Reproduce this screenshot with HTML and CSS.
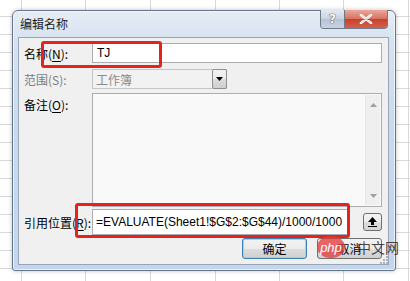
FILE: index.html
```html
<!DOCTYPE html>
<html>
<head>
<meta charset="utf-8">
<title>编辑名称</title>
<link rel="stylesheet" href="styles.css">
</head>
<body>
<div class="sheet">
  <div class="dialog">
    <div class="titlebar">
      <span class="title">编辑名称</span>
      <div class="caption-btns">
        <span class="cap-help">?</span>
        <span class="cap-close">
          <svg width="14" height="10" viewBox="0 0 14 10"><path d="M2 1 L12 9 M12 1 L2 9" stroke="#fff" stroke-width="2.6" stroke-linecap="round"/><path d="M2 1 L12 9 M12 1 L2 9" stroke="#7a2b22" stroke-width="0.6" opacity="0.4"/></svg>
        </span>
      </div>
    </div>
    <div class="client">
      <div class="row row-name">
        <label>名称(<u>N</u>):</label>
        <div class="field name-field">TJ</div>
      </div>
      <div class="row row-scope">
        <label class="disabled">范围(S):</label>
        <div class="combo">
          <span class="combo-text">工作簿</span>
          <span class="combo-btn"><svg width="7" height="4" viewBox="0 0 7 4"><path d="M0 0 H7 L3.5 4 Z" fill="#000"/></svg></span>
        </div>
      </div>
      <div class="row row-note">
        <label>备注(<u>O</u>):</label>
        <div class="memo">
          <div class="memo-text"></div>
          <div class="vscroll">
            <svg width="7" height="4" viewBox="0 0 7 4"><path d="M0 4 H7 L3.5 0 Z" fill="#a0a0a0"/></svg>
            <svg width="7" height="4" viewBox="0 0 7 4"><path d="M0 0 H7 L3.5 4 Z" fill="#a0a0a0"/></svg>
          </div>
        </div>
      </div>
      <div class="row row-ref">
        <label>引用位置(<u>R</u>):</label>
        <div class="field ref-field">=EVALUATE(Sheet1!$G$2:$G$44)/1000/1000</div>
        <span class="collapse-btn"><svg width="9" height="10" viewBox="0 0 9 10"><path d="M4.5 0 L9 5 H6 V8 H3 V5 H0 Z" fill="#000"/><rect x="0" y="9" width="9" height="1.2" fill="#000"/></svg></span>
      </div>
      <div class="buttons">
        <button class="btn btn-default">确定</button>
        <button class="btn">取消</button>
      </div>
      <span class="grip"><svg width="10" height="10" viewBox="0 0 10 10"><g fill="#a9b4c2"><rect x="8" y="2" width="2" height="2"/><rect x="5" y="5" width="2" height="2"/><rect x="8" y="5" width="2" height="2"/><rect x="2" y="8" width="2" height="2"/><rect x="5" y="8" width="2" height="2"/><rect x="8" y="8" width="2" height="2"/></g></svg></span>
    </div>
    <div class="mark mark-name"></div>
    <div class="mark mark-ref"></div>
  </div>
  <div class="watermark">
    <span class="wm-php">php</span>
    <span class="wm-text">中文网</span>
  </div>
</div>
</body>
</html>
```
FILE: styles.css
```css
body{
	margin: 0;
	font-family: "Noto Sans CJK SC", "Liberation Sans", sans-serif;
	font-size: 12px;
	color: #000;
}

.sheet{
	position: relative;
	width: 410px;
	height: 281px;
	overflow: hidden;
	box-sizing: border-box;
	padding: 10px 0 0 12px;
	background-color: #fff;
	background-image:
		repeating-linear-gradient(to right, transparent 0, transparent 21px, #d9d9d9 21px, #d9d9d9 22px, transparent 22px, transparent 64.5px),
		repeating-linear-gradient(to bottom, transparent 0, transparent 16px, #d9d9d9 16px, #d9d9d9 17px, transparent 17px, transparent 18px);
}

/* window */
.dialog{
	position: relative;
	width: 384px;
	height: 261px;
	box-sizing: border-box;
	display: flex;
	flex-direction: column;
	border: 1px solid #66768c;
	border-radius: 6px 6px 3px 3px;
	background: linear-gradient(#e6edf6, #d6e2f0 30px, #c9daee 120px, #c3d6ed);
	box-shadow: inset 0 0 0 1px rgba(255,255,255,0.6), 0 0 4px rgba(0,0,0,0.25);
}

.titlebar{
	height: 26px;
	flex: none;
	display: flex;
	align-items: flex-start;
}
.title{
	padding-left: 7px;
	line-height: 26px;
	font-size: 12px;
	color: #1e1e1e;
}
.caption-btns{
	margin-left: auto;
	margin-right: 7px;
	margin-top: -1px;
	display: flex;
	border: 1px solid #6d7a8c;
	border-top: none;
	border-radius: 0 0 4px 4px;
	overflow: hidden;
}
.cap-help{
	width: 23px;
	height: 18px;
	display: flex;
	align-items: center;
	justify-content: center;
	font-family: "DejaVu Sans", sans-serif;
	font-weight: bold;
	font-size: 12px;
	color: #fff;
	text-shadow: 0 0 1px #333, 0 0 1px #333;
	background: linear-gradient(#e3e9f1, #c8d3e0 50%, #b7c4d4 51%, #c6d2e1);
	border-right: 1px solid #6d7a8c;
}
.cap-close{
	width: 42px;
	height: 18px;
	display: flex;
	align-items: center;
	justify-content: center;
	background: linear-gradient(#e9a99c, #d7705f 50%, #c7402c 51%, #d6604a);
}

/* client area */
.client{
	position: relative;
	flex: 1;
	margin: 0 6px 5px 5px;
	box-sizing: border-box;
	padding: 5px 6px 0 5px;
	background: #f0f0f0;
	border: 1px solid #98a6b8;
}

.row{
	display: flex;
	align-items: center;
}
.row label{
	width: 68px;
	flex: none;
	font-size: 12px;
	white-space: nowrap;
}
.row label u{
	text-decoration-thickness: 1px;
	text-underline-offset: 2px;
}
.row label.disabled{
	color: #7d7d7d;
}

.field{
	box-sizing: border-box;
	border: 1px solid #abadb3;
	background: #fff;
	padding: 0 4px;
	font-family: "Liberation Sans", sans-serif;
	font-size: 12px;
	display: flex;
	align-items: center;
}
.name-field{
	width: 290px;
	height: 20px;
}

.row-scope{
	margin-top: 6px;
}
.combo{
	width: 135px;
	height: 20px;
	box-sizing: border-box;
	border: 1px solid #c5c5c5;
	background: #f2f2f2;
	display: flex;
	align-items: center;
}
.combo-text{
	flex: 1;
	padding-left: 3px;
	color: #8a8a8a;
	font-size: 12px;
}
.combo-btn{
	width: 15px;
	height: 20px;
	margin: -1px -1px -1px 0;
	box-sizing: border-box;
	border: 1px solid #8e8f8f;
	border-radius: 2px;
	background: linear-gradient(#f2f2f2, #ebebeb 50%, #dddddd 51%, #cfcfcf);
	display: flex;
	align-items: center;
	justify-content: center;
}

.row-note{
	margin-top: 4px;
	align-items: flex-start;
}
.row-note label{
	padding-top: 3px;
}
.memo{
	width: 291px;
	height: 114px;
	box-sizing: border-box;
	border: 1px solid #abadb3;
	background: #f9f9f9;
	display: flex;
}
.memo-text{
	flex: 1;
}
.vscroll{
	width: 15px;
	margin: 1px 1px 1px 0;
	background: #efefef;
	border-left: 1px solid #e6e6e6;
	display: flex;
	flex-direction: column;
	justify-content: space-between;
	align-items: center;
	padding: 8px 0 7px;
	box-sizing: border-box;
}

.row-ref{
	margin-top: 2px;
}
.ref-field{
	width: 258px;
	height: 26px;
	padding-left: 3px;
}
.collapse-btn{
	margin-left: 14px;
	width: 19px;
	height: 18px;
	box-sizing: border-box;
	border: 1px solid #707070;
	border-radius: 3px;
	background: linear-gradient(#f4f4f4, #ececec 50%, #dedede 51%, #d2d2d2);
	display: flex;
	align-items: center;
	justify-content: center;
}

.buttons{
	margin-top: 3px;
	display: flex;
	justify-content: flex-end;
	gap: 10px;
}
.btn{
	width: 65px;
	height: 21px;
	box-sizing: border-box;
	border: 1px solid #707070;
	border-radius: 3px;
	background: linear-gradient(#f3f3f3, #ebebeb 50%, #dddddd 51%, #cfcfcf);
	font-family: "Noto Sans CJK SC", sans-serif;
	font-size: 12px;
	color: #000;
	padding: 0;
	line-height: 19px;
}
.btn-default{
	border-color: #3c7fb1;
	box-shadow: inset 0 0 0 1px #9fd3f4;
}

.grip{
	position: absolute;
	right: 0;
	bottom: 0;
	line-height: 0;
}

/* red annotation boxes */
.mark{
	position: absolute;
	box-sizing: border-box;
	border: 3px solid #e3231c;
	border-radius: 3px;
}
.mark-name{
	left: 28px;
	top: 30px;
	width: 121px;
	height: 27px;
}
.mark-ref{
	left: 62px;
	top: 192px;
	width: 275px;
	height: 35px;
}

/* watermark */
.watermark{
	position: absolute;
	left: 317px;
	top: 236px;
	display: flex;
	align-items: center;
}
.wm-php{
	width: 28px;
	height: 22px;
	border-radius: 50%;
	background: rgba(226, 60, 60, 0.78);
	color: #fff;
	font-family: "Liberation Sans", sans-serif;
	font-style: italic;
	font-size: 13px;
	display: flex;
	align-items: center;
	justify-content: center;
}
.wm-text{
	margin-left: 12px;
	font-size: 14px;
	color: rgba(40, 40, 40, 0.85);
	letter-spacing: 0;
}
```
